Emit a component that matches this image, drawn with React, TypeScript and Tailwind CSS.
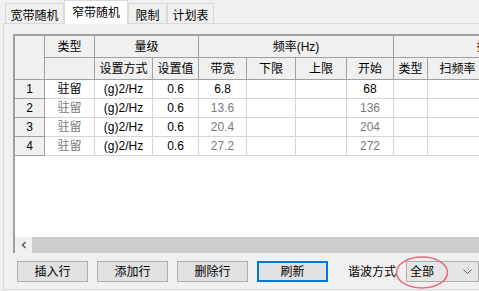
import React from 'react';

const tabs = [
  { name: '宽带随机', w: 'w-[59px]' },
  { name: '窄带随机', w: 'w-[64px]', active: true },
  { name: '限制', w: 'w-[39px]' },
  { name: '计划表', w: 'w-[47px]' },
];

const rows = [
  { n: 1, bw: '6.8', start: '68', first: true },
  { n: 2, bw: '13.6', start: '136' },
  { n: 3, bw: '20.4', start: '204' },
  { n: 4, bw: '27.2', start: '272' },
];

const hd = 'bg-[#f0f0f0] border-r border-b border-[#a0a0a0] flex items-center justify-center text-black';
const td = 'bg-white border-r border-b border-[#d5d5d5] flex items-center justify-center';

const Button = ({ label, primary }: { label: string; primary?: boolean }) => (
  <button
    className={`w-[71px] h-[21px] flex items-center justify-center bg-[#e1e1e1] text-black ${
      primary ? 'border-2 border-[#0078d7]' : 'border border-[#adadad]'
    }`}
  >
    {label}
  </button>
);

export default function App() {
  return (
    <div className="w-[479px] h-[291px] overflow-hidden relative bg-[#f0f0f0] text-[12px] leading-none text-black font-['Liberation_Sans','Noto_Sans_CJK_SC',sans-serif]">
      {/* tab strip */}
      <div className="flex items-end h-[23px] pl-[5px] relative z-10">
        {tabs.map((t) =>
          t.active ? (
            <div
              key={t.name}
              className={`${t.w} h-[24px] -mb-px bg-white border border-b-0 border-[#d9d9d9] flex justify-center pt-[6px]`}
            >
              {t.name}
            </div>
          ) : (
            <div
              key={t.name}
              className={`${t.w} h-[20px] bg-[#f0f0f0] border border-b-0 border-[#d9d9d9] flex justify-center pt-[6px]`}
            >
              {t.name}
            </div>
          )
        )}
      </div>

      {/* tab page */}
      <div className="ml-[3px] w-[500px] h-[267px] border border-[#d9d9d9] pt-[10px] pl-[9px] flex flex-col">
        {/* data grid */}
        <div className="h-[219px] border-t-2 border-l-2 border-[#a0a0a0] bg-white flex flex-col overflow-hidden">
          <div className="grid w-max grid-cols-[30px_50px_58px_46px_48px_49px_51px_47px_34px_60px_96px] grid-rows-[22px_22px_19px_19px_19px_19px]">
            <div className={`${hd} row-span-2`} />
            <div className={hd}>类型</div>
            <div className={`${hd} col-span-2`}>量级</div>
            <div className={`${hd} col-span-4`}>频率(Hz)</div>
            <div className={`${hd} col-span-3`}>扫频</div>

            <div className={hd} />
            <div className={hd}>设置方式</div>
            <div className={hd}>设置值</div>
            <div className={hd}>带宽</div>
            <div className={hd}>下限</div>
            <div className={hd}>上限</div>
            <div className={hd}>开始</div>
            <div className={hd}>类型</div>
            <div className={hd}>扫频率</div>
            <div className={hd} />

            {rows.map((r) => {
              const c = r.first ? 'text-black' : 'text-[#7a7a7a]';
              return (
                <React.Fragment key={r.n}>
                  <div className={hd}>{r.n}</div>
                  <div className={`${td} ${c}`}>驻留</div>
                  <div className={td}>(g)2/Hz</div>
                  <div className={td}>0.6</div>
                  <div className={`${td} ${c}`}>{r.bw}</div>
                  <div className={td} />
                  <div className={td} />
                  <div className={`${td} ${c}`}>{r.start}</div>
                  <div className={td} />
                  <div className={td} />
                  <div className={td} />
                </React.Fragment>
              );
            })}
          </div>
          <div className="flex-1 bg-white" />
          {/* horizontal scrollbar */}
          <div className="h-[16px] flex shrink-0">
            <div className="w-[17px] bg-[#f0f0f0] flex items-center justify-center">
              <svg width="8" height="8" viewBox="0 0 8 8">
                <path d="M5.5 1 L2.5 4 L5.5 7" fill="none" stroke="#606060" strokeWidth="1.6" />
              </svg>
            </div>
            <div className="flex-1 bg-[#cdcdcd]" />
          </div>
        </div>

        {/* buttons row */}
        <div className="flex items-center mt-[8px] ml-[4px] gap-[9px]">
          <Button label="插入行" />
          <Button label="添加行" />
          <Button label="删除行" />
          <Button label="刷新" primary />
          <span className="ml-[11px]">谐波方式</span>
          <div className="ml-[1px] w-[73px] h-[21px] bg-[#e5e5e5] border border-[#adadad] flex items-center justify-between pl-[3px] pr-[6px]">
            <span>全部</span>
            <svg width="9" height="5" viewBox="0 0 9 5">
              <path d="M0.5 0.5 L4.5 4.5 L8.5 0.5" fill="none" stroke="#606060" strokeWidth="1" />
            </svg>
          </div>
        </div>
      </div>

      {/* red annotation ellipse */}
      <svg className="absolute left-[395px] top-[256px]" width="54" height="34" viewBox="0 0 54 34">
        <ellipse cx="27" cy="16.5" rx="25.5" ry="15.5" fill="none" stroke="#ee6677" strokeWidth="1.5" />
      </svg>
    </div>
  );
}
